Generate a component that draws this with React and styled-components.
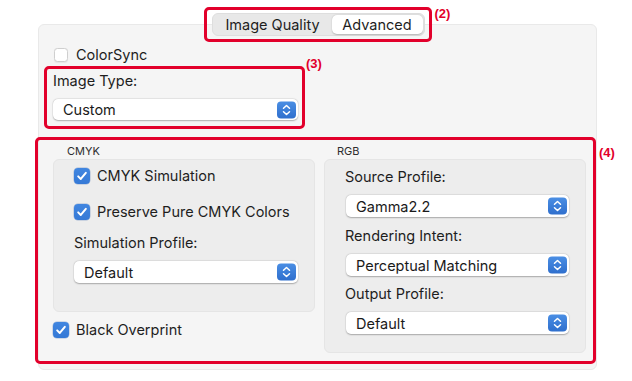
import React from 'react'
import styled, { createGlobalStyle } from 'styled-components'

const RED = '#e2002b'
const BLUE = '#3579d6'

const GlobalStyle = createGlobalStyle`
  html, body {
    margin: 0;
    padding: 0;
    background: #ffffff;
  }
  * { box-sizing: border-box; }
`

const Page = styled.div`
  width: 632px;
  height: 381px;
  padding: 7px 35px 0 38px;
  font-family: Inter, "Noto Sans", "Liberation Sans", sans-serif;
  font-size: 14.5px;
  line-height: 17px;
  color: #1e1e1e;
  background: #ffffff;
  overflow: hidden;
`

const TabsRow = styled.div`
  display: flex;
  justify-content: center;
  position: relative;
  z-index: 1;
`

const Callout = styled.div`
  position: relative;
  border: 3px solid ${RED};
  border-radius: 5px;
  padding: ${props => props.$pad};
  width: ${props => props.$width || 'auto'};
  margin: ${props => props.$margin || '0'};
`

const Tag = styled.span`
  position: absolute;
  left: calc(100% + ${props => props.$x}px);
  top: ${props => props.$y}px;
  font-family: "Liberation Sans", Arial, sans-serif;
  font-weight: 700;
  font-size: 13px;
  line-height: 15px;
  color: ${RED};
  white-space: nowrap;
`

const Segmented = styled.div`
  display: flex;
  height: 23px;
  padding: 1px;
  background: #e8e8e8;
  border: 1px solid #dedede;
  border-radius: 6px;
`

const Segment = styled.div`
  display: flex;
  align-items: center;
  justify-content: center;
  width: ${props => props.$width}px;
  border-radius: 5px;
  background: ${props => (props.$active ? '#ffffff' : 'transparent')};
  box-shadow: ${props => (props.$active ? '0 0.5px 1.5px rgba(0,0,0,0.22)' : 'none')};
`

const Panel = styled.div`
  margin-top: -18px;
  height: 346px;
  padding: 21px 0 8px 5px;
  background: #f5f5f5;
  border: 1px solid #e9e9e9;
  border-radius: 6px;
`

const CheckRow = styled.div`
  display: flex;
  align-items: center;
  gap: ${props => props.$gap || 7}px;
  height: 17px;
  padding-left: ${props => props.$indent || 0}px;
  margin: ${props => props.$margin || '0'};
`

const BoxOff = styled.span`
  width: 14px;
  height: 14px;
  border-radius: 3.5px;
  background: #ffffff;
  border: 1px solid #cfcfcf;
  box-shadow: 0 0.5px 1px rgba(0,0,0,0.06);
`

const BoxOn = styled.span`
  display: flex;
  align-items: center;
  justify-content: center;
  width: 16px;
  height: 16px;
  border-radius: 4px;
  background: linear-gradient(#4186e0, ${BLUE});
  box-shadow: 0 0 0 0.5px rgba(30, 80, 160, 0.35);
`

const FieldLabel = styled.div`
  margin: ${props => props.$margin || '0 0 10px 0'};
`

const SelectBox = styled.div`
  position: relative;
  display: flex;
  align-items: center;
  height: ${props => props.$h || 22}px;
  padding-left: 10px;
  background: #ffffff;
  border-radius: 5px;
  box-shadow: 0 0.5px 1.5px rgba(0,0,0,0.28), 0 0 0 0.5px rgba(0,0,0,0.04);
  color: #1a1a1a;
  margin: ${props => props.$margin || '0'};
`

const Stepper = styled.span`
  position: absolute;
  right: 2px;
  top: 50%;
  transform: translateY(-50%);
  width: 19px;
  height: 17px;
  border-radius: 4px;
  background: linear-gradient(#4a8ee4, #2f6fcd);
  display: flex;
  align-items: center;
  justify-content: center;
`

const Columns = styled.div`
  display: grid;
  grid-template-columns: 1fr 1fr;
  column-gap: 9px;
`

const GroupTitle = styled.div`
  font-size: 11px;
  line-height: 13px;
  color: #2e2e2e;
  padding: 5px 0 1px ${props => props.$indent}px;
`

const GroupBox = styled.div`
  background: #ededed;
  border: 1px solid #e5e5e5;
  border-radius: 6px;
  height: ${props => props.$h}px;
  padding: ${props => props.$pad};
`

const Spacer = styled.div`
  height: ${props => props.$h}px;
`

const Check = ({ on }) =>
  on ? (
    <BoxOn>
      <svg width="12" height="12" viewBox="0 0 11 11">
        <path d="M2 5.8 L4.4 8.2 L9 2.6" fill="none" stroke="#fff" strokeWidth="1.8" strokeLinecap="round" strokeLinejoin="round" />
      </svg>
    </BoxOn>
  ) : (
    <BoxOff />
  )

const Select = ({ value, h, margin }) => (
  <SelectBox $h={h} $margin={margin}>
    {value}
    <Stepper>
      <svg width="19" height="17" viewBox="0 0 19 17">
        <path d="M6.5 6.8 L9.5 4 L12.5 6.8" fill="none" stroke="#fff" strokeWidth="1.5" strokeLinecap="round" strokeLinejoin="round" />
        <path d="M6.5 10.2 L9.5 13 L12.5 10.2" fill="none" stroke="#fff" strokeWidth="1.5" strokeLinecap="round" strokeLinejoin="round" />
      </svg>
    </Stepper>
  </SelectBox>
)

const App = () => (
  <Page>
    <GlobalStyle />
    <TabsRow>
      <Callout $pad="3px 4px 3px 5px">
        <Segmented>
          <Segment $width={118}>Image Quality</Segment>
          <Segment $width={91} $active>Advanced</Segment>
        </Segmented>
        <Tag $x={6} $y={-4}>(2)</Tag>
      </Callout>
    </TabsRow>

    <Panel>
      <CheckRow $indent={10} $gap={8}>
        <Check on={false} />
        ColorSync
      </CheckRow>

      <Callout $pad="3px 4px 6px 6px" $width="261px" $margin="3px 0 0 0">
        <FieldLabel>Image Type:</FieldLabel>
        <Select value="Custom" h={21} />
        <Tag $x={4} $y={-13}>(3)</Tag>
      </Callout>

      <Callout $pad="0 7px 0 15px" $margin="8px 0 0 -9px">
        <Columns>
          <div>
            <GroupTitle $indent={14}>CMYK</GroupTitle>
            <GroupBox $h={153} $pad="7px 16px 0 20px">
              <CheckRow>
                <Check on />
                CMYK Simulation
              </CheckRow>
              <CheckRow $margin="19px 0 0 0">
                <Check on />
                Preserve Pure CMYK Colors
              </CheckRow>
              <FieldLabel $margin="14px 0 10px 0">Simulation Profile:</FieldLabel>
              <Select value="Default" />
            </GroupBox>
            <CheckRow $gap={7} $margin="9px 0 0 0">
              <Check on />
              Black Overprint
            </CheckRow>
          </div>
          <div>
            <GroupTitle $indent={13}>RGB</GroupTitle>
            <GroupBox $h={194} $pad="8px 16px 0 20px">
              <FieldLabel>Source Profile:</FieldLabel>
              <Select value="Gamma2.2" margin="0 0 10px 1px" />
              <FieldLabel>Rendering Intent:</FieldLabel>
              <Select value="Perceptual Matching" margin="0 0 9px 1px" />
              <FieldLabel>Output Profile:</FieldLabel>
              <Select value="Default" margin="0 0 0 1px" />
            </GroupBox>
          </div>
        </Columns>
        <Spacer $h={8} />
        <Tag $x={6} $y={5}>(4)</Tag>
      </Callout>
    </Panel>
  </Page>
)

export default App
